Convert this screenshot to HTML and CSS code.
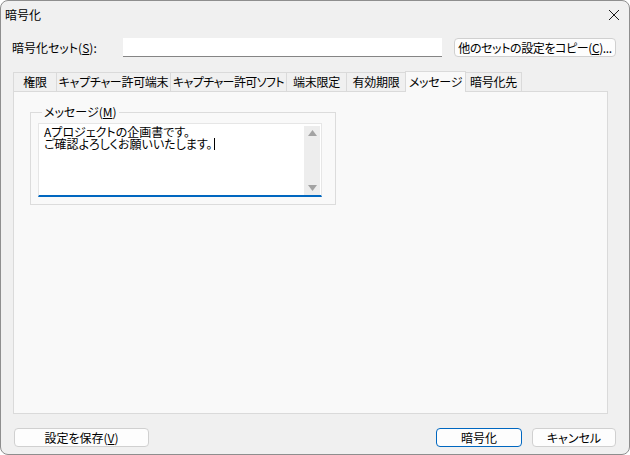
FILE: index.html
```html
<!DOCTYPE html>
<html>
<head>
    <meta charset="UTF-8">
    <title>暗号化</title>
    <link rel="stylesheet" href="styles.css">
</head>
<body>
    <div class="window">
        <div class="titlebar">
            <span class="title">暗号化</span>
            <svg class="close" width="12" height="12" viewBox="0 0 12 12">
                <path d="M1 1 L11 11 M11 1 L1 11" stroke="#1a1a1a" stroke-width="1" fill="none"/>
            </svg>
        </div>

        <div class="set-row">
            <label class="set-label">暗号化セット(<u>S</u>):</label>
            <div class="set-input"></div>
            <button class="btn copy-btn">他のセットの設定をコピー(<u>C</u>)...</button>
        </div>

        <div class="tabs">
            <div class="tab t1">権限</div>
            <div class="tab t2">キャプチャー許可端末</div>
            <div class="tab t3">キャプチャー許可ソフト</div>
            <div class="tab t4">端末限定</div>
            <div class="tab t5">有効期限</div>
            <div class="tab t6 active">メッセージ</div>
            <div class="tab t7">暗号化先</div>
        </div>

        <div class="panel">
            <fieldset class="group">
                <legend>メッセージ(<u>M</u>)</legend>
                <div class="memo">
                    <div class="memo-text">
                        <div class="memo-line">Aプロジェクトの企画書です。</div>
                        <div class="memo-line">ご確認よろしくお願いいたします。<span class="caret"></span></div>
                    </div>
                    <div class="scrollbar">
                        <svg width="9" height="6" viewBox="0 0 9 6"><path d="M0 6 L4.5 0 L9 6 Z" fill="#a3a3a3"/></svg>
                        <svg width="9" height="6" viewBox="0 0 9 6"><path d="M0 0 L4.5 6 L9 0 Z" fill="#a3a3a3"/></svg>
                    </div>
                </div>
            </fieldset>
        </div>

        <div class="bottom-row">
            <button class="btn save-btn">設定を保存(<u>V</u>)</button>
            <div class="spacer"></div>
            <button class="btn primary ok-btn">暗号化</button>
            <button class="btn cancel-btn">キャンセル</button>
        </div>
    </div>
</body>
</html>
```

FILE: styles.css
```css
body {
    margin: 0;
    background-color: #ffffff;
    font-family: "Noto Sans CJK JP", "Noto Sans", sans-serif;
    font-size: 12px;
    font-feature-settings: "palt";
    color: #000000;
    white-space: nowrap;
}

u {
    text-decoration: underline;
    text-underline-offset: 1px;
}

.window {
    width: 630px;
    height: 455px;
    box-sizing: border-box;
    border: 1px solid #8e8e8e;
    border-radius: 8px;
    background-color: #f0f0f0;
    display: flex;
    flex-direction: column;
    overflow: hidden;
}

.titlebar {
    height: 28px;
    display: flex;
    align-items: center;
    padding: 0 9px 0 4px;
}

.title {
    flex: 1;
    line-height: 14px;
}

.close {
    display: block;
}

/* 暗号化セット行 */
.set-row {
    margin-top: 9px;
    height: 19px;
    display: flex;
    align-items: center;
    padding-left: 11px;
}

.set-label {
    width: 111px;
}

.set-input {
    width: 319px;
    height: 19px;
    box-sizing: border-box;
    background-color: #ffffff;
    border-bottom: 1px solid #858585;
}

.btn {
    font-family: inherit;
    font-size: 12px;
    font-feature-settings: "palt";
    height: 19px;
    box-sizing: border-box;
    padding: 0;
    background-color: #fdfdfd;
    border: 1px solid #d0d0d0;
    border-radius: 4px;
    color: #000000;
    line-height: 16px;
    white-space: nowrap;
}

.copy-btn {
    margin-left: 12px;
    width: 162px;
    letter-spacing: -0.4px;
}

/* タブ */
.tabs {
    margin-top: 15px;
    height: 19px;
    display: flex;
    padding-left: 12px;
    align-items: flex-end;
}

.tab {
    height: 19px;
    box-sizing: border-box;
    border: 1px solid #dadada;
    border-bottom: none;
    margin-right: -1px;
    text-align: center;
    line-height: 18px;
    background-color: #f0f0f0;
    letter-spacing: -0.3px;
    overflow: hidden;
}

.tab.active {
    height: 21px;
    margin-bottom: -1px;
    background-color: #f9f9f9;
    position: relative;
    z-index: 1;
    line-height: 20px;
}

.t1 { width: 44px; }
.t2 { width: 115px; }
.t3 { width: 117px; letter-spacing: -0.6px; }
.t4 { width: 61px; }
.t5 { width: 60px; }
.t6 { width: 61px; }
.t7 { width: 57px; }

.panel {
    margin-left: 12px;
    width: 595px;
    height: 323px;
    box-sizing: border-box;
    border: 1px solid #dadada;
    background-color: #f9f9f9;
    padding: 13px 0 0 16px;
}

.group {
    margin: 0;
    width: 306px;
    height: 100px;
    box-sizing: border-box;
    border: 1px solid #dcdcdc;
    padding: 4px 13px 0 7px;
}

.group legend {
    padding: 0 2px;
    margin-left: 4px;
    line-height: 14px;
}

.memo {
    height: 74px;
    display: flex;
    background-color: #ffffff;
    border: 1px solid #e6e6e6;
    border-bottom: 2px solid #0067c0;
    box-sizing: border-box;
}

.memo-text {
    flex: 1;
    padding: 2px 0 0 5px;
}

.memo-line {
    height: 12px;
    line-height: 12px;
}

.caret {
    display: inline-block;
    width: 1px;
    height: 12px;
    background-color: #000000;
    vertical-align: top;
    margin-left: 2px;
}

.scrollbar {
    width: 16px;
    margin: 2px 1px 0 0;
    background-color: #ededed;
    display: flex;
    flex-direction: column;
    justify-content: space-between;
    align-items: center;
    padding: 4px 0 4px;
}

.scrollbar svg {
    display: block;
}

/* 下部ボタン */
.bottom-row {
    margin-top: 14px;
    display: flex;
    padding: 0 13px 0 13px;
}

.spacer {
    flex: 1;
}

.save-btn {
    width: 135px;
}

.ok-btn {
    width: 86px;
}

.primary {
    border-color: #0067c0;
}

.cancel-btn {
    width: 84px;
    margin-left: 10px;
}
```
